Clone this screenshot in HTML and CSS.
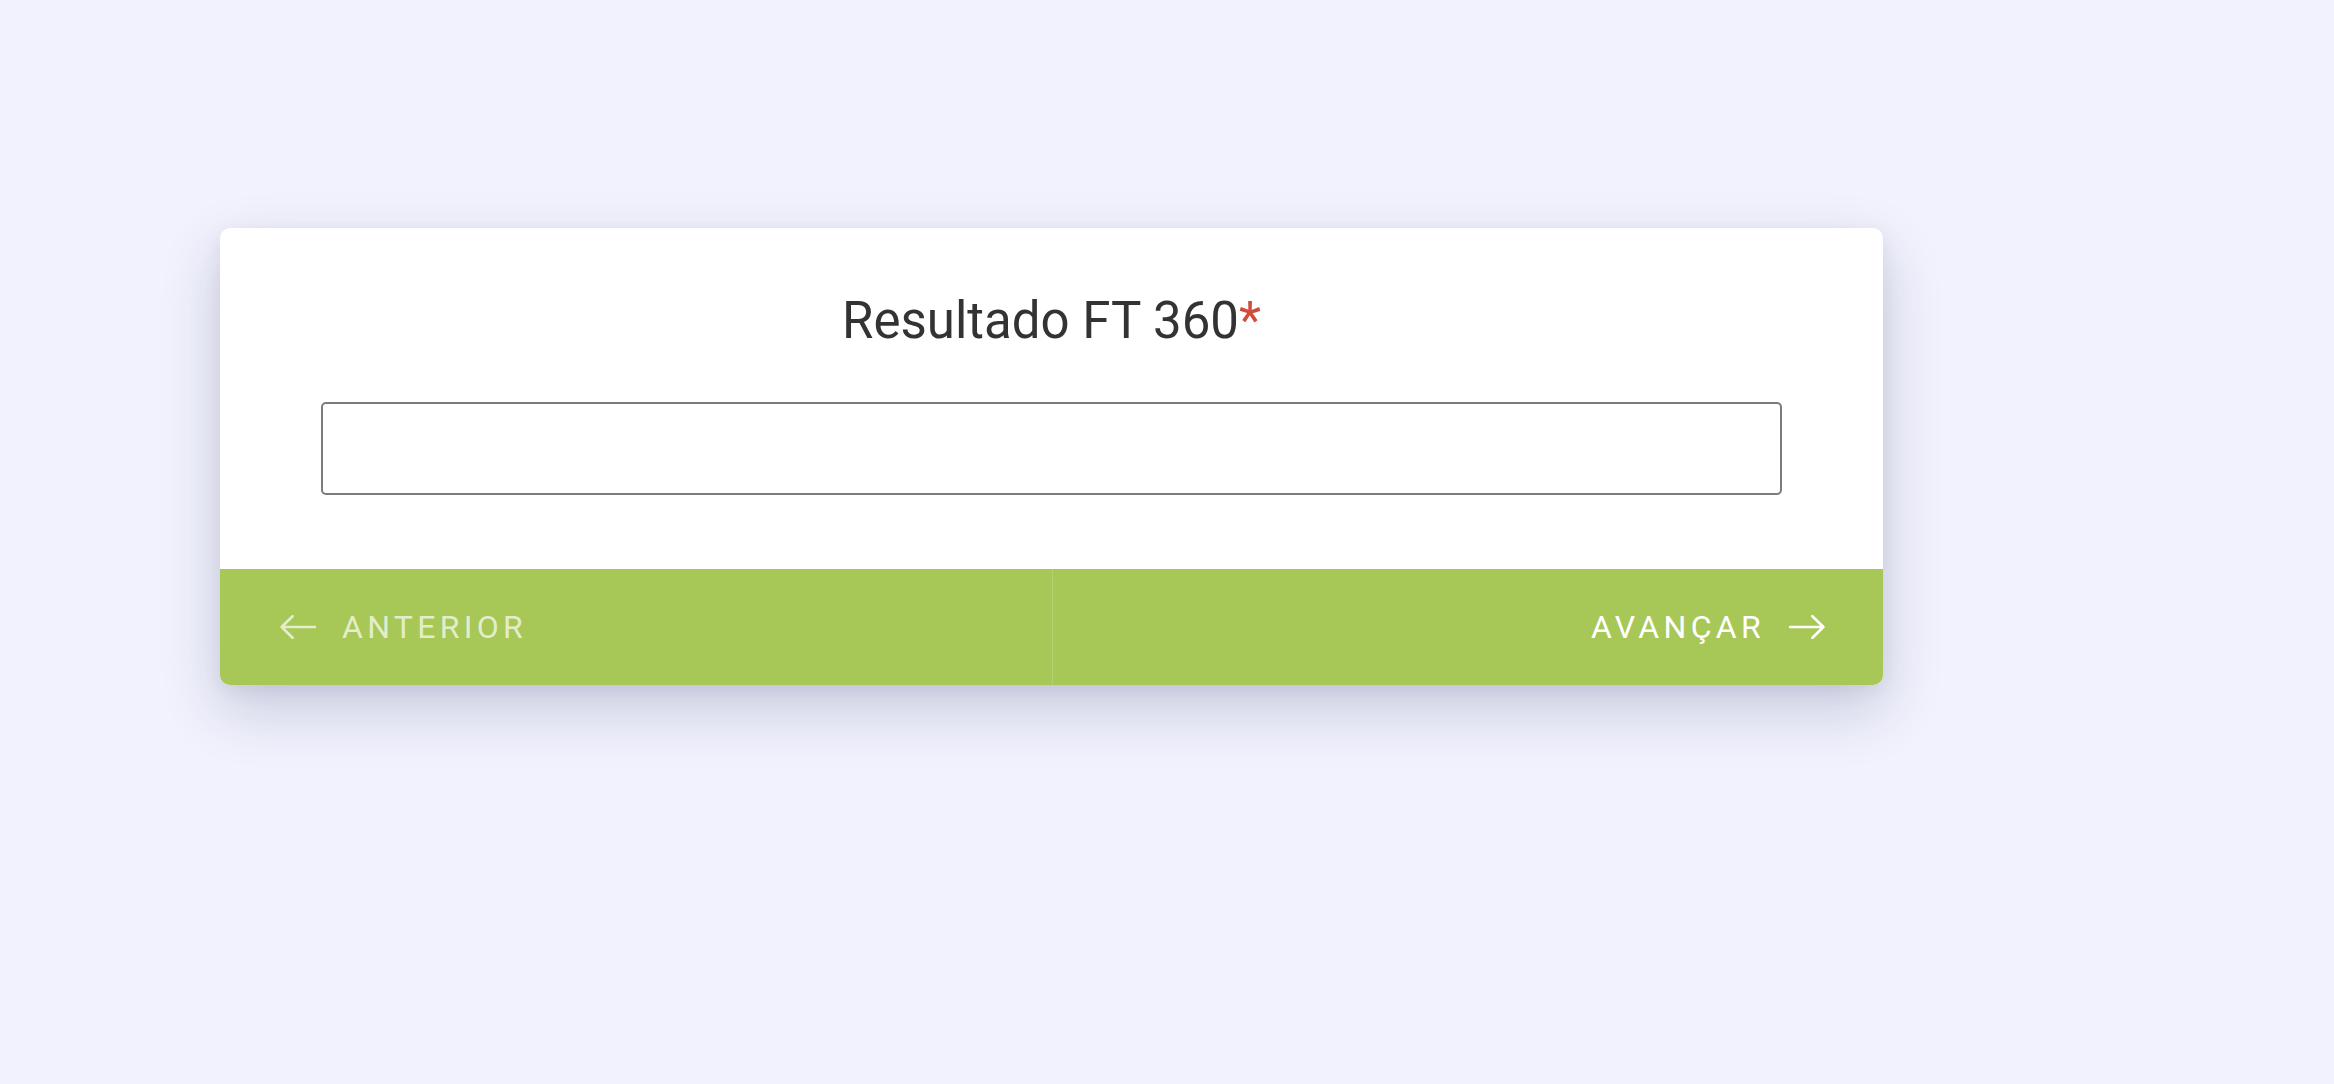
FILE: index.html
```html
<!DOCTYPE html>
<html lang="pt-BR">
<head>
<meta charset="utf-8">
<title>Resultado FT 360</title>
<link rel="stylesheet" href="styles.css">
</head>
<body>
<main class="page">
  <section class="card">
    <div class="card-body">
      <h2 class="title">Resultado FT 360<span class="required">*</span></h2>
      <input class="field" type="text" aria-label="Resultado FT 360">
    </div>
    <div class="card-footer">
      <button class="nav-btn prev" type="button">
        <svg class="arrow" width="36" height="24" viewBox="0 0 36 24" aria-hidden="true"><path d="M35 12H1.6M12.6 1.2L1.6 12l11 10.8"/></svg>
        <span>Anterior</span>
      </button>
      <button class="nav-btn next" type="button">
        <span>Avançar</span>
        <svg class="arrow" width="36" height="24" viewBox="0 0 36 24" aria-hidden="true"><path d="M1 12h33.4M23.4 1.2L34.4 12l-11 10.8"/></svg>
      </button>
    </div>
  </section>
</main>
</body>
</html>
```

FILE: styles.css
```css
html, body {
  margin: 0;
  padding: 0;
  background: #f1f2fd;
  font-family: Roboto, "Liberation Sans", Arial, sans-serif;
}

.page {
  min-height: 1084px;
  box-sizing: border-box;
  padding: 228px 0 0 220px;
  display: flex;
  align-items: flex-start;
}

.card {
  width: 1663px;
  background: #ffffff;
  border-radius: 10px;
  overflow: hidden;
  box-shadow: 0 24px 60px rgba(40, 42, 90, 0.2), 0 6px 18px rgba(40, 42, 90, 0.07);
}

.card-body {
  padding: 62px 101px 74px;
}

.title {
  margin: 0 0 51px;
  font-size: 51px;
  line-height: 61px;
  font-weight: 400;
  color: #333333;
  text-align: center;
}

.required {
  color: #d24b3d;
}

.field {
  display: block;
  box-sizing: border-box;
  width: 100%;
  height: 93px;
  margin: 0;
  padding: 0 20px;
  border: 2px solid #7c7c7c;
  border-radius: 5px;
  background: #ffffff;
  font: inherit;
  font-size: 30px;
  outline: none;
}

.card-footer {
  display: grid;
  grid-template-columns: 1fr 1fr;
  height: 116px;
  background: #a7c756;
}

.nav-btn {
  display: flex;
  align-items: center;
  margin: 0;
  border: 0;
  background: transparent;
  font-family: Roboto, "Liberation Sans", Arial, sans-serif;
  font-size: 32px;
  font-weight: 400;
  letter-spacing: 4.3px;
  text-transform: uppercase;
  cursor: pointer;
}

.prev {
  justify-content: flex-start;
  gap: 26px;
  padding: 0 0 0 60px;
  color: rgba(255, 255, 255, 0.7);
}

.next {
  justify-content: flex-end;
  gap: 24px;
  padding: 0 58px 0 0;
  color: #ffffff;
  border-left: 1px solid rgba(255, 255, 255, 0.16);
}

.arrow {
  flex: none;
  fill: none;
  stroke: currentColor;
  stroke-width: 2.6;
  stroke-linecap: round;
  stroke-linejoin: round;
}
```
